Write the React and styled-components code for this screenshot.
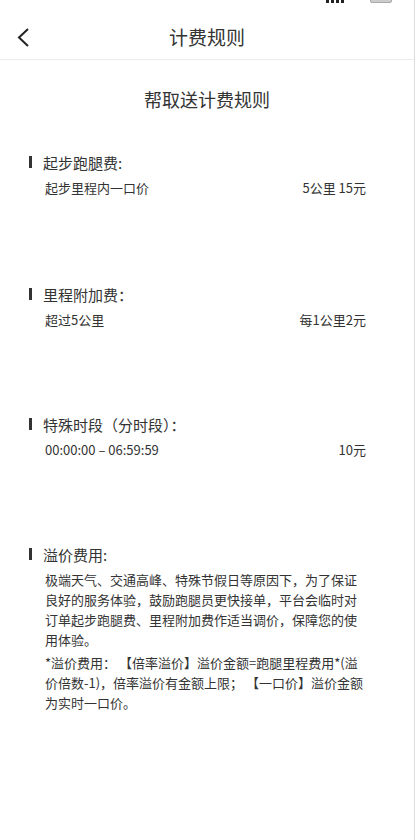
import styled, { createGlobalStyle } from "styled-components";

const GlobalStyle = createGlobalStyle`
  * {
    box-sizing: border-box;
  }
  body {
    margin: 0;
    background: #fff;
    font-family: "Noto Sans CJK SC", "Noto Sans", sans-serif;
    color: #333;
  }
`;

const Page = styled.div`
  width: 415px;
  min-height: 840px;
  background: #fff;
  border-right: 1px solid #dcdcdc;
  overflow: hidden;
`;

const StatusBar = styled.div`
  height: 15px;
  display: flex;
  align-items: flex-start;
  justify-content: space-between;
  padding: 0 22px 0 24px;
  overflow: hidden;
`;

const Time = styled.span`
  margin-top: -15px;
  font-size: 15px;
  line-height: 18px;
  font-weight: 700;
  color: #111;
  letter-spacing: 1px;
`;

const StatusIcons = styled.div`
  display: flex;
  align-items: flex-start;
  gap: 26px;
  margin-top: -8px;
`;

const Signal = styled.div`
  display: flex;
  gap: 2px;
  span {
    width: 3px;
    height: 11px;
    background: #222;
  }
`;

const Battery = styled.div`
  width: 22px;
  height: 11px;
  border: 1px solid #aaa;
  border-radius: 2px;
  background: #ccc;
`;

const NavBar = styled.div`
  height: 45px;
  position: relative;
  display: flex;
  align-items: center;
  justify-content: center;
  border-bottom: 1px solid #ececec;
`;

const BackButton = styled.div`
  position: absolute;
  left: 16px;
  top: 12px;
  width: 16px;
  height: 21px;
  display: flex;
`;

const NavTitle = styled.div`
  font-size: 19px;
  color: #333;
  line-height: 26px;
`;

const Content = styled.div`
  padding: 26px 48px 40px 29px;
`;

const Heading = styled.h1`
  margin: 0 0 39px;
  font-size: 18px;
  font-weight: 400;
  line-height: 26px;
  text-align: center;
  padding-left: 19px;
  color: #333;
`;

const Section = styled.section`
  margin-bottom: ${(p) => p.$gap || 83}px;
`;

const SectionTitle = styled.div`
  display: flex;
  align-items: center;
  gap: 11px;
  height: 22px;
  font-size: 15px;
  color: #333;
  &::before {
    content: "";
    width: 3px;
    height: 12px;
    background: #333;
  }
`;

const Row = styled.div`
  display: flex;
  justify-content: space-between;
  margin-top: 5px;
  padding-left: 16px;
  font-size: 13px;
  line-height: 20px;
  color: #333;
`;

const Paragraph = styled.p`
  margin: ${(p) => (p.$first ? "5px" : "3px")} 0 0;
  padding-left: 16px;
  font-size: 13px;
  line-height: 20px;
  color: #333;
`;

const sections = [
  { title: "起步跑腿费:", left: "起步里程内一口价", right: "5公里 15元", gap: 85 },
  { title: "里程附加费：", left: "超过5公里", right: "每1公里2元" },
  { title: "特殊时段（分时段）：", left: "00:00:00 – 06:59:59", right: "10元" },
];

function App() {
  return (
    <Page>
      <GlobalStyle />
      <StatusBar>
        <Time>9:41</Time>
        <StatusIcons>
          <Signal>
            <span />
            <span />
            <span />
            <span />
          </Signal>
          <Battery />
        </StatusIcons>
      </StatusBar>
      <NavBar>
        <BackButton>
          <svg width="16" height="21" viewBox="0 0 16 21">
            <polyline
              points="12,2 3,10.5 12,19"
              fill="none"
              stroke="#222"
              strokeWidth="2"
            />
          </svg>
        </BackButton>
        <NavTitle>计费规则</NavTitle>
      </NavBar>
      <Content>
        <Heading>帮取送计费规则</Heading>
        {sections.map((s) => (
          <Section key={s.title} $gap={s.gap}>
            <SectionTitle>{s.title}</SectionTitle>
            <Row>
              <span>{s.left}</span>
              <span>{s.right}</span>
            </Row>
          </Section>
        ))}
        <Section>
          <SectionTitle>溢价费用:</SectionTitle>
          <Paragraph $first>
            极端天气、交通高峰、特殊节假日等原因下，为了保证良好的服务体验，鼓励跑腿员更快接单，平台会临时对订单起步跑腿费、里程附加费作适当调价，保障您的使用体验。
          </Paragraph>
          <Paragraph>
            *溢价费用：&nbsp;【倍率溢价】溢价金额=跑腿里程费用*(溢价倍数-1)，倍率溢价有金额上限；&nbsp;【一口价】溢价金额为实时一口价。
          </Paragraph>
        </Section>
      </Content>
    </Page>
  );
}

export default App;
